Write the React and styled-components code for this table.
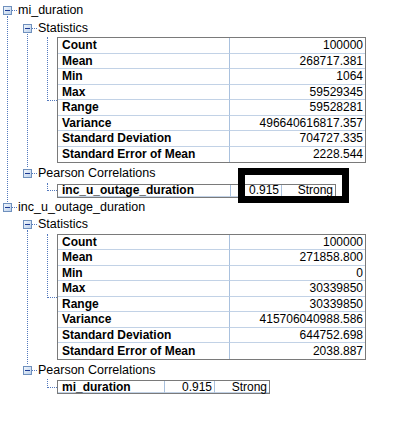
import React from "react";
import styled, { createGlobalStyle, css } from "styled-components";

const GlobalStyle = createGlobalStyle`
  html, body {
    margin: 0;
    padding: 0;
    background: #fff;
  }
  body {
    font-family: "Liberation Sans", Arial, sans-serif;
    color: #000;
  }
`;

const DOT = "#5479bd";

const Page = styled.div`
  position: relative;
  width: 412px;
  height: 428px;
  padding: 2px 0 0 3px;
  box-sizing: border-box;
`;

const Branch = styled.div`
  position: relative;

  ${(p) =>
    !p.$last &&
    css`
      &::before {
        content: "";
        position: absolute;
        left: 4px;
        top: 14px;
        bottom: -4px;
        border-left: 1px dotted ${DOT};
      }
    `}
`;

const Children = styled.div`
  padding-left: 20px;
`;

const NodeRow = styled.div`
  display: flex;
  align-items: center;
  height: 17.5px;
`;

const Connector = styled.span`
  width: 5px;
  margin-right: 1px;
  border-top: 1px dotted ${DOT};
`;

const NodeLabel = styled.span`
  font-size: 12.5px;
  line-height: 17.5px;
  white-space: nowrap;
`;

const Leaf = styled.div`
  position: relative;
  padding: ${(p) => p.$pt}px 0 0 14px;
  margin-bottom: ${(p) => p.$mb}px;

  &::before {
    content: "";
    position: absolute;
    left: 4px;
    top: 0;
    width: 9px;
    height: 50%;
    border-left: 1px dotted ${DOT};
    border-bottom: 1px dotted ${DOT};
  }
`;

const StatsGrid = styled.div`
  display: grid;
  grid-template-columns: 172px 1fr;
  width: 309px;
  border: 1px solid #7a7a7a;
  box-sizing: border-box;
  background: #fff;
`;

const Cell = styled.div`
  height: ${(p) => p.$h}px;
  box-sizing: border-box;
  display: flex;
  align-items: center;
  font-size: 12px;
  white-space: nowrap;
  border-bottom: 1px solid #c2d2e6;
  justify-content: ${(p) => (p.$right ? "flex-end" : "flex-start")};
  padding: ${(p) => (p.$right ? "0 2px 0 0" : "0 0 0 4px")};
  font-weight: ${(p) => (p.$bold ? 700 : 400)};
  border-right: ${(p) => (p.$divider ? "1px solid #a9c1de" : "none")};

  ${StatsGrid} > &:nth-last-child(-n + 2) {
    border-bottom: none;
  }
`;

const CorrRow = styled.div`
  display: grid;
  grid-template-columns: ${(p) => p.$cols};
  width: max-content;
  border: 1px solid #7a7a7a;
  background: #fff;
`;

const Highlight = styled.div`
  position: absolute;
  left: 238px;
  top: 168px;
  width: 111px;
  height: 35px;
  border: 7px solid #000;
  box-sizing: border-box;
`;

function Toggle() {
  return (
    <svg width="9" height="9" viewBox="0 0 9 9" style={{ flex: "none" }}>
      <defs>
        <linearGradient id="tg" x1="0" y1="0" x2="1" y2="1">
          <stop offset="0" stopColor="#f4f8fd" />
          <stop offset="1" stopColor="#b9cfea" />
        </linearGradient>
      </defs>
      <rect x="0.5" y="0.5" width="8" height="8" fill="url(#tg)" stroke="#6f90bd" />
      <rect x="2" y="4" width="5" height="1" fill="#1c3a93" />
    </svg>
  );
}

function Node({ label, last, children }) {
  return (
    <Branch $last={last}>
      <NodeRow>
        <Toggle />
        <Connector />
        <NodeLabel>{label}</NodeLabel>
      </NodeRow>
      <Children>{children}</Children>
    </Branch>
  );
}

function StatsTable({ rows }) {
  return (
    <Leaf $pt={0} $mb={2}>
      <StatsGrid>
        {rows.map(([k, v]) => (
          <React.Fragment key={k}>
            <Cell $h={15.5} $bold $divider>
              {k}
            </Cell>
            <Cell $h={15.5} $right>
              {v}
            </Cell>
          </React.Fragment>
        ))}
      </StatsGrid>
    </Leaf>
  );
}

function CorrTable({ name, value, strength, cols }) {
  return (
    <Leaf $pt={1} $mb={1}>
      <CorrRow $cols={cols}>
        <Cell $h={12} $bold $divider>
          {name}
        </Cell>
        <Cell $h={12} $right $divider>
          {value}
        </Cell>
        <Cell $h={12} $right>
          {strength}
        </Cell>
      </CorrRow>
    </Leaf>
  );
}

const variables = [
  {
    name: "mi_duration",
    stats: [
      ["Count", "100000"],
      ["Mean", "268717.381"],
      ["Min", "1064"],
      ["Max", "59529345"],
      ["Range", "59528281"],
      ["Variance", "496640616817.357"],
      ["Standard Deviation", "704727.335"],
      ["Standard Error of Mean", "2228.544"],
    ],
    corr: { name: "inc_u_outage_duration", value: "0.915", strength: "Strong" },
    cols: "173px 51px 53px",
  },
  {
    name: "inc_u_outage_duration",
    stats: [
      ["Count", "100000"],
      ["Mean", "271858.800"],
      ["Min", "0"],
      ["Max", "30339850"],
      ["Range", "30339850"],
      ["Variance", "415706040988.586"],
      ["Standard Deviation", "644752.698"],
      ["Standard Error of Mean", "2038.887"],
    ],
    corr: { name: "mi_duration", value: "0.915", strength: "Strong" },
    cols: "107px 50px 54px",
  },
];

export default function App() {
  return (
    <>
      <GlobalStyle />
      <Page>
        {variables.map((v, i) => (
          <Node key={v.name} label={v.name} last={i === variables.length - 1}>
            <Node label="Statistics">
              <StatsTable rows={v.stats} />
            </Node>
            <Node label="Pearson Correlations" last>
              <CorrTable {...v.corr} cols={v.cols} />
            </Node>
          </Node>
        ))}
        <Highlight />
      </Page>
    </>
  );
}
